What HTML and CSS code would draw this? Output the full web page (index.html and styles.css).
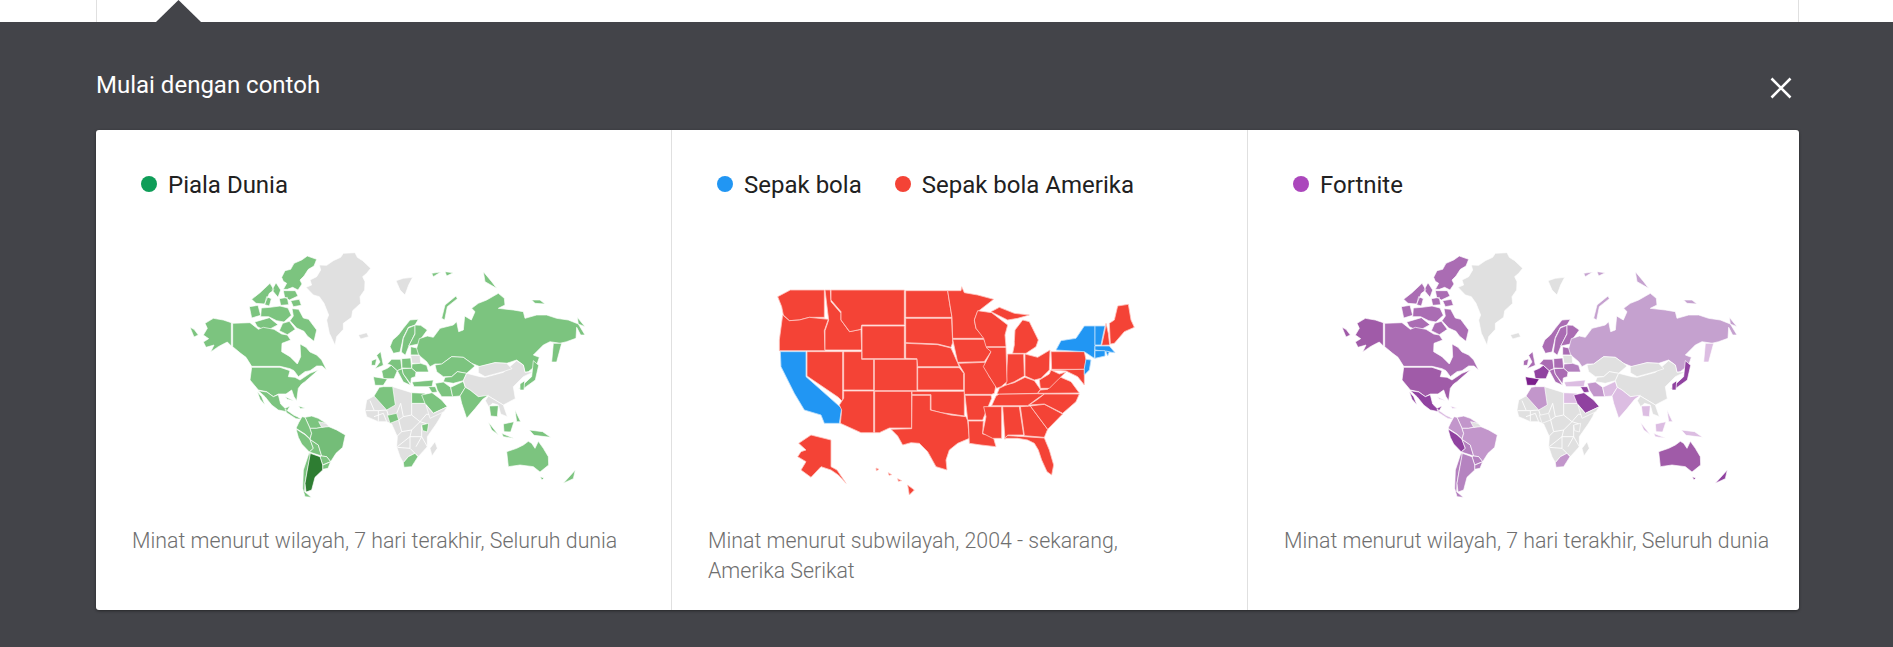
FILE: index.html
```html
<!DOCTYPE html>
<html lang="id">
<head>
<meta charset="utf-8">
<title>Mulai dengan contoh</title>
<link rel="stylesheet" href="styles.css">
</head>
<body>
<svg class="defs" width="0" height="0" aria-hidden="true">
  <symbol id="world" viewBox="0 0 1290 810">
    <!-- Greenland, Iceland, Svalbard -->
    <path class="g" d="M408 142L425 135 420 120 440 110 452 90 448 75 470 76 490 62 512 52 520 40 555 38 562 52 578 62 602 85 590 100 578 110 585 125 584 150 570 170 572 190 548 212 545 232 520 250 520 268 500 290 495 316 484 292 478 280 470 240 476 225 462 190 448 170 430 165Z"/>
    <path class="g" d="M565 285L590 278 596 290 572 297ZM678 122L700 115 728 112 716 135 705 165 690 150Z"/>
    <!-- Arctic islands -->
    <path class="t3" d="M335 112L345 92 362 88 372 70 395 60 412 48 440 58 432 78 415 88 402 108 390 120 396 132 384 150 368 142 352 148 340 148 350 130 340 124Z"/>
    <path class="t3" d="M318 128L332 150 324 172 306 150ZM340 152L376 152 384 168 358 180 344 172ZM245 178L270 158 300 130 312 150 298 160 284 192 258 190ZM290 170L304 176 298 198 284 194ZM238 200L264 196 272 226 245 234ZM328 176L352 172 356 194 332 196ZM362 182L388 178 394 196 370 200Z"/>
    <path class="t3" d="M274 204L300 202 330 198 354 204 364 226 342 246 320 242 296 230 272 230ZM366 206L386 208 400 234 416 238 440 270 432 304 412 288 402 274 380 264 360 242 370 228ZM254 246L298 233 324 254 302 266 290 274 262 260ZM338 250L358 244 376 268 352 284 328 272Z"/>
    <!-- Alaska, Canada, USA, Mexico -->
    <path class="t2" d="M105 250L130 235 160 240 184 248 184 318 172 306 160 312 145 320 122 336 132 315 108 322 100 306 116 296 100 285 112 265ZM60 262L72 268 85 285 72 291Z"/>
    <path class="t3" d="M188 250L240 248 265 268 280 262 312 268 335 282 352 285 362 300 336 310 335 335 360 350 382 372 392 350 390 312 408 322 420 336 440 345 455 360 470 390 456 378 440 378 420 392 405 395 385 410 372 392 360 386 330 379 245 379 228 352 212 340 188 320Z"/>
    <path class="t2" d="M245 382L330 382 360 392 355 410 375 412 390 420 420 400 445 390 420 412 405 425 395 432 385 445 380 482 372 470 365 450 348 462 325 462 310 470 290 455 265 450 240 420Z"/>
    <path class="t5" d="M265 452L290 456 310 470 325 464 332 492 345 505 360 498 350 515 325 510 305 495 285 470ZM262 455L275 470 285 495 270 478Z"/>
    <path class="t7" d="M345 507L358 516 372 526 382 530 395 538 378 536 350 518ZM345 470L372 482 352 478ZM385 498L405 504 392 506Z"/>
    <!-- South America -->
    <path class="t6" d="M405 532L425 528 445 535 468 550 455 562 440 565 420 565Z"/>
    <path class="t6" d="M396 530L405 532 420 565 425 580 420 596 405 582 378 565 386 548Z"/>
    <path class="t5" d="M378 567L405 584 420 598 430 625 418 636 395 612 385 592Z"/>
    <path class="t9" d="M420 598L445 615 455 648 430 640 418 636 430 625Z"/>
    <path class="t6b" d="M420 565L440 565 455 562 472 558 500 570 526 585 518 622 498 640 482 665 470 650 455 648 445 615 420 598 425 580Z"/>
    <path class="g" d="M446 545L468 550 478 560 455 562Z"/>
    <path class="t9" d="M455 648L470 650 482 665 458 675 450 650ZM458 675L482 665 474 685 458 688Z"/>
    <path class="t9" d="M418 636L421 648 412 690 405 730 404 755 424 772 405 770 398 745 400 690Z"/>
    <path class="t0" d="M421 640L450 650 458 675 458 690 435 712 425 750 408 756 405 730 412 690Z"/>
    <!-- Africa -->
    <path class="g" d="M590 480L612 468 640 440 668 440 725 458 725 490 770 490 778 510 790 528 822 506 812 530 800 550 772 590 772 620 745 650 735 640 715 650 700 668 690 650 680 620 682 590 665 552 650 545 625 545 590 530 585 510Z"/>
    <path class="g" d="M795 605L802 625 786 648 780 625Z"/>
    <path class="lines" d="M587 512L625 512 650 510M625 512L625 545M612 530L640 520 650 545M650 510L655 526M680 520L692 490M692 490L700 530 686 540M700 530L725 525 725 490M725 525L750 545 770 522 790 528M750 545L772 552M686 540L695 575 680 590M695 575L725 570 750 545M725 570L720 590 755 590 755 555M720 590L682 620M682 622L720 625 745 650M720 625L720 590M755 590L772 620M738 620L755 590M600 482L612 510"/>
    <path class="t7" d="M725 458L765 460 772 490 725 490Z"/>
    <path class="t6" d="M612 468L628 442 640 440 668 440 676 495 650 510Z"/>
    <path class="t8" d="M652 526L680 520 686 540 660 550Z"/>
    <path class="t8" d="M755 555L776 550 772 576 758 572Z"/>
    <path class="t6" d="M700 668L715 650 735 640 744 650 725 680 702 682Z"/>
    <!-- Europe -->
    <path class="t3" d="M660 320L668 300 685 285 700 265 720 240 745 238 735 255 715 262 700 292 690 336 670 340Z"/>
    <path class="t3" d="M700 295L715 264 735 256 735 280 716 320 706 346 694 336Z"/>
    <path class="t3" d="M735 255L752 256 772 270 750 300 746 312 716 318 735 282Z"/>
    <path class="t3" d="M620 346L632 335 640 376 615 386 630 366ZM605 362L620 356 616 376 604 376Z"/>
    <path class="t3" d="M722 320L745 325 748 345 722 345Z"/>
    <path class="g" d="M722 346L750 346 752 370 726 370Z"/>
    <path class="t5" d="M635 392L652 385 664 376 682 392 672 416 640 416Z"/>
    <path class="t4" d="M610 410L652 417 640 436 615 436Z"/>
    <path class="t3" d="M652 372L665 358 692 358 696 386 682 392 664 376Z"/>
    <path class="t3" d="M695 356L722 354 725 385 696 384Z"/>
    <path class="t9" d="M726 372L752 370 770 376 776 396 738 396 725 385Z"/>
    <path class="t3" d="M682 392L696 386 700 402 722 436 700 426Z"/>
    <path class="t3" d="M696 386L725 385 738 396 736 410 724 414 722 432 700 402Z"/>
    <!-- Russia, Central Asia -->
    <path class="t1" d="M745 342L740 325 748 296 772 288 790 292 810 265 850 255 860 245 866 275 880 270 884 228 904 240 915 215 905 205 925 190 950 180 985 160 1003 175 1005 195 985 205 1030 210 1060 215 1065 235 1100 225 1130 225 1160 235 1195 240 1225 252 1245 285 1232 285 1220 262 1218 295 1190 305 1170 310 1140 305 1120 315 1090 345 1108 352 1100 375 1075 395 1065 397 1060 375 1040 360 1010 370 975 368 930 380 905 370 880 352 845 350 815 372 795 372 780 380 770 365 752 350Z"/>
    <path class="t1" d="M815 235L825 195 858 168 862 176 832 200 824 240ZM785 100L812 96 790 110ZM825 95L850 98 830 108ZM940 95L965 125 980 145 945 125ZM1085 180L1110 180 1125 192 1095 190Z"/>
    <path class="t8" d="M795 375L815 372 845 350 880 352 905 370 915 378 890 400 862 395 845 410 820 410 800 395Z"/>
    <path class="t8" d="M825 412L845 410 862 395 890 400 880 422 850 430 820 425Z"/>
    <!-- Middle East -->
    <path class="t7" d="M726 426L790 420 786 440 732 440Z"/>
    <path class="t6" d="M796 430L820 426 842 442 848 470 815 470 802 450Z"/>
    <path class="t5" d="M775 440L796 440 802 456 786 458Z"/>
    <path class="t5" d="M755 465L786 458 815 480 832 500 790 520 765 490Z"/>
    <path class="g" d="M768 495L790 520 832 500 822 515 780 535Z"/>
    <path class="t7" d="M842 442L880 424 886 442 870 468 848 470Z"/>
    <!-- Asia -->
    <path class="g" d="M880 422L890 400 930 410 945 412 1000 397 1040 362 1060 375 1065 397 1092 395 1060 410 1030 440 1036 476 1000 495 955 468 925 470 900 450 886 442Z"/>
    <path class="g" d="M925 380L975 368 1010 370 1026 386 1000 395 945 410 925 398Z"/>
    <path class="t7" d="M870 468L886 442 900 450 925 470 955 466 938 478 916 505 890 535 875 490Z"/>
    <path class="g" d="M955 468L1000 495 1012 530 992 522 985 495 968 490 956 500 946 482Z"/>
    <path class="t7" d="M958 498L985 497 982 530 962 528ZM955 546L985 584 965 570ZM995 580L1032 595 1000 590ZM1000 552L1032 545 1022 576 1002 575ZM1035 510L1052 545 1040 545ZM1078 570L1118 575 1142 592 1092 586Z"/>
    <path class="t7" d="M1150 310L1175 310 1160 366 1145 366Z"/>
    <path class="t1" d="M1222 232L1245 260 1225 252Z"/>
    <path class="t5" d="M1090 362L1106 376 1096 420 1060 446 1046 446 1085 410Z"/>
    <path class="t5" d="M1050 432L1064 422 1062 450 1050 450Z"/>
    <!-- Oceania -->
    <path class="t2" d="M1010 635L1040 625 1060 615 1075 604 1085 610 1095 625 1105 604 1120 625 1135 650 1136 675 1110 696 1090 680 1050 675 1015 680ZM1110 710L1122 714 1116 720Z"/>
    <path class="t5" d="M1180 730L1205 702 1216 690 1210 716Z"/>
  </symbol>
</svg>
<div class="top-strip">
  <div class="top-box"></div>
  <div class="notch"></div>
</div>
<main class="panel">
  <header class="panel-head">
    <h1 class="panel-title">Mulai dengan contoh</h1>
    <svg class="close" viewBox="0 0 22 22" aria-label="Tutup"><path d="M1.5 1.5L20.5 20.5M20.5 1.5L1.5 20.5"/></svg>
  </header>
  <section class="cards">
    <article class="col">
      <div class="legend">
        <span class="item"><i class="dot green"></i>Piala Dunia</span>
      </div>
      <svg class="map map-green" viewBox="0 0 1290 810"><use href="#world"/></svg>
      <p class="cap">Minat menurut wilayah, 7 hari terakhir, Seluruh dunia</p>
    </article>
    <article class="col">
      <div class="legend">
        <span class="item"><i class="dot blue"></i>Sepak bola</span>
        <span class="item"><i class="dot red"></i>Sepak bola Amerika</span>
      </div>
      <svg class="map map-us" viewBox="-15 -90 1290 810">
        <path d="M80 80L118 60 220 60 220 142 175 142 145 150 115 152 97 135 92 110Z"/>
        <path d="M95 135L115 152 145 150 175 142 232 148 220 182 222 242 85 242 85 210Z"/>
        <path class="b" d="M88 245L165 245 165 320 272 415 265 460 220 460 210 435 160 420 130 370 90 290Z"/>
        <path d="M168 245L275 245 275 395 262 382 168 318Z"/>
        <path d="M222 60L238 60 240 95 270 130 270 150 295 185 330 178 332 240 222 240 222 182 233 150Z"/>
        <path d="M240 60L460 60 460 165 332 165 330 178 296 185 270 150 270 125 240 90Z"/>
        <path d="M333 168L460 168 460 266 333 266Z"/>
        <path d="M278 245L332 245 332 268 368 268 368 360 278 360Z"/>
        <path d="M370 268L498 268 498 362 370 362Z"/>
        <path d="M278 363L368 363 368 488 330 488 268 460 272 420 265 405 278 385Z"/>
        <path d="M371 364L482 364 482 474 415 474 385 488 371 488Z"/>
        <path d="M464 62L590 62 596 100 603 142 464 142Z"/>
        <path d="M464 145L602 145 605 218 600 232 560 222 464 218Z"/>
        <path d="M464 220L560 224 600 234 625 290 500 290 498 266 464 265Z"/>
        <path d="M500 293L625 293 638 310 638 360 500 360Z"/>
        <path d="M483 364L640 364 640 438 600 432 570 428 540 420 540 374 483 374Z"/>
        <path d="M483 376L538 376 538 420 600 435 645 440 650 452 655 505 620 520 595 540 585 570 588 600 555 590 530 545 505 520 480 518 455 525 440 498 420 478 482 476Z"/>
        <path d="M590 62L630 62 632 50 640 68 680 75 728 88 680 125 670 150 675 175 702 205 605 205 603 142 596 100Z"/>
        <path d="M605 208L698 208 720 245 700 275 620 277Z"/>
        <path d="M622 280L702 277 715 320 735 345 730 370 722 373 640 373 640 310Z"/>
        <path d="M642 376L720 376 722 385 705 425 695 450 650 450Z"/>
        <path d="M652 453L697 453 695 492 725 495 735 530 690 525 655 520Z"/>
        <path d="M698 410L752 410 752 505 725 505 695 490 705 440Z"/>
        <path d="M755 410L805 410 818 495 770 495 762 508Z"/>
        <path d="M808 410L838 408 890 478 880 502 820 497Z"/>
        <path d="M760 505L770 497 820 500 880 504 895 540 908 585 902 615 888 605 872 570 862 540 850 520 830 510 800 505Z"/>
        <path d="M838 408L880 403 935 432 890 478Z"/>
        <path d="M830 408L860 388 880 372 985 372 975 395 935 430 880 402 835 405Z"/>
        <path d="M722 407L735 378 745 372 860 371 880 372 860 385 830 407Z"/>
        <path d="M738 372L745 355 765 345 790 338 822 322 850 332 868 358 860 370 745 372Z"/>
        <path d="M860 370L868 360 890 358 925 320 960 335 985 369 880 370Z"/>
        <path d="M868 355L865 330 895 312 900 300 925 312 945 306 925 325 895 355Z"/>
        <path d="M822 252L860 262 897 240 895 300 870 325 850 330 822 318Z"/>
        <path d="M770 252L818 252 820 318 790 335 765 345Z"/>
        <path d="M705 232L765 232 768 335 750 350 737 355 715 320 697 290 720 245Z"/>
        <path d="M680 122L722 128 770 165 762 195 765 230 705 230 698 205 675 175 670 150Z"/>
        <path d="M720 125L745 112 790 130 835 135 800 145 770 150Z"/>
        <path d="M790 215L792 180 815 150 835 155 862 210 855 230 825 250 785 250 790 225Z"/>
        <path d="M900 245L1000 245 1005 270 1000 298 902 298Z"/>
        <path d="M902 300L1000 298 1000 345 980 320 945 303Z"/>
        <path class="b" d="M915 240L930 212 975 205 1000 168 1032 168 1032 225 1030 265 1000 245Z"/>
        <path class="b" d="M1005 268L1020 270 1015 300 1000 315 1000 295Z"/>
        <path class="b" d="M1032 168L1062 168 1055 200 1050 225 1032 225Z"/>
        <path d="M1065 160L1072 190 1076 225 1052 226 1062 180Z"/>
        <path d="M1075 160L1090 150 1100 108 1132 103 1140 150 1150 172 1120 185 1090 220 1078 222Z"/>
        <path class="b" d="M1032 228L1075 228 1092 248 1032 240Z"/>
        <path class="b" d="M1032 242L1062 242 1062 258 1032 265Z"/>
        <path class="b" d="M1064 243L1075 245 1070 258Z"/>
        <path d="M143 520L180 495 240 510 240 590 258 600 285 640 262 615 240 600 210 590 180 622 150 600 165 575 140 560 150 545 165 540Z"/>
        <path d="M470 645L490 660 475 675ZM375 594L384 598 376 602ZM412 608L422 614 414 616ZM440 626L452 632 442 634Z"/>
      </svg>
      <p class="cap">Minat menurut subwilayah, 2004 - sekarang, Amerika Serikat</p>
    </article>
    <article class="col">
      <div class="legend">
        <span class="item"><i class="dot purple"></i>Fortnite</span>
      </div>
      <svg class="map map-purple" viewBox="0 0 1290 810"><use href="#world"/></svg>
      <p class="cap nowrap">Minat menurut wilayah, 7 hari terakhir, Seluruh dunia</p>
    </article>
  </section>
</main>
</body>
</html>
```
FILE: styles.css
```css
* { box-sizing: border-box; }
html, body { margin: 0; height: 647px; overflow: hidden; background: #fff; }
body { font-family: Roboto, "Liberation Sans", sans-serif; display: flex; flex-direction: column; }
.defs { position: absolute; }

.top-strip { height: 22px; padding: 0 94px 0 96px; position: relative; }
.top-box { height: 22px; border-left: 1px solid #e0e0e0; border-right: 1px solid #e0e0e0; }
.notch {
  position: absolute; left: 156px; bottom: 0; width: 45px; height: 22px;
  background: #434449; clip-path: polygon(50% 0, 100% 100%, 0 100%);
}

.panel { flex: 1; background: #434449; padding: 0 94px 0 96px; }
.panel-head { height: 108px; padding-top: 45px; display: flex; justify-content: space-between; align-items: flex-start; }
.panel-title { margin: 0; font-size: 24px; line-height: 36px; font-weight: 400; color: #fff; }
.close { width: 22px; height: 22px; margin: 10px 7px 0 0; }
.close path { stroke: #fff; stroke-width: 2.6; fill: none; }

.cards {
  height: 480px; display: grid; grid-template-columns: 575px 576px 552px;
  background: #fff; border-radius: 3px; box-shadow: 0 1px 3px rgba(0, 0, 0, .45); overflow: hidden;
}
.col { border-left: 1px solid #e0e0e0; height: 480px; }
.col:first-child { border-left: 0; }

.legend { display: flex; gap: 33px; height: 110px; padding: 39px 0 0 45px; }
.item { display: inline-flex; align-items: center; gap: 11px; height: 32px; font-size: 24px; color: #212121; }
.dot { width: 16px; height: 16px; border-radius: 50%; margin-bottom: 2px; }
.green { background: #0f9d58; }
.blue { background: #2196f3; }
.red { background: #f44336; }
.purple { background: #ab47bc; }

.map { display: block; width: 430px; height: 270px; margin-left: 74px; }

.cap { margin: 16px 0 0 36px; width: 490px; font-size: 21.33px; line-height: 30px; font-weight: 300; color: #6f6f6f; }
.nowrap { white-space: nowrap; width: auto; }

/* World map tiers: filled per map through custom properties */
.g { fill: #e0e0e0; stroke: #fff; stroke-width: 2; }
.lines { fill: none; stroke: #fff; stroke-width: 2.6; }
.t0 { fill: var(--t0); stroke: #fff; stroke-width: 2; }
.t1 { fill: var(--t1); stroke: #fff; stroke-width: 2; }
.t2 { fill: var(--t2); stroke: #fff; stroke-width: 2; }
.t3 { fill: var(--t3); stroke: #fff; stroke-width: 2; }
.t4 { fill: var(--t4); stroke: #fff; stroke-width: 2; }
.t5 { fill: var(--t5); stroke: #fff; stroke-width: 2; }
.t6 { fill: var(--t6); stroke: #fff; stroke-width: 2; }
.t6b { fill: var(--t6b); stroke: #fff; stroke-width: 2; }
.t7 { fill: var(--t7); stroke: #fff; stroke-width: 2; }
.t8 { fill: var(--t8); stroke: #fff; stroke-width: 2; }
.t9 { fill: var(--t9); stroke: #fff; stroke-width: 2; }

.map-green {
  --t0: #2e7d32; --t1: #7cc47f; --t2: #7cc47f; --t3: #7cc47f; --t4: #7cc47f; --t5: #7cc47f;
  --t6: #7cc47f; --t6b: #74bd78; --t7: #7cc47f; --t8: #7cc47f; --t9: #7cc47f;
}
.map-purple {
  --t0: #b583c0; --t1: #c5a1cf; --t2: #a05ba8; --t3: #aa6cb3; --t4: #7b1f8c; --t5: #9042a0;
  --t6: #c296cb; --t6b: #c296cb; --t7: #dcbde2; --t8: #e0e0e0; --t9: #b37fbe;
}

.map-us path { fill: #f44336; stroke: #ffc9c4; stroke-width: 2.4; }
.map-us path.b { fill: #2196f3; stroke: #bbdefb; }
```
